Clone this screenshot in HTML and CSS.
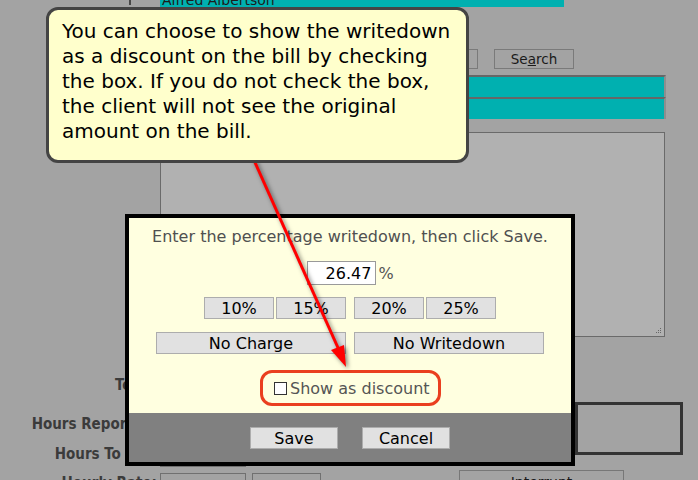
FILE: index.html
```html
<!DOCTYPE html>
<html>
<head>
<meta charset="utf-8">
<link rel="stylesheet" href="styles.css">
</head>
<body>
<div class="page">
  <div class="row r-client">
    <div class="lbl"><span class="tick"></span></div>
    <div class="client">Alfred Albertson</div>
  </div>
  <div class="row r-search">
    <div class="lbl"></div>
    <div class="search-input"></div>
    <button class="search-btn">Se<u>a</u>rch</button>
  </div>
  <div class="row r-bar first"><div class="lbl"></div><div class="bar"></div></div>
  <div class="row r-bar"><div class="lbl"></div><div class="bar"></div></div>
  <div class="row r-notes">
    <div class="lbl"></div>
    <div class="notes">
      <svg class="grip" width="7" height="7" viewBox="0 0 7 7"><rect x="5" y="1" width="1" height="1" fill="#666"/><rect x="3" y="3" width="1" height="1" fill="#666"/><rect x="5" y="3" width="1" height="1" fill="#666"/><rect x="1" y="5" width="1" height="1" fill="#666"/><rect x="3" y="5" width="1" height="1" fill="#666"/><rect x="5" y="5" width="1" height="1" fill="#666"/></svg>
    </div>
  </div>
  <div class="lower">
    <div class="flbl l1">Total:</div>
    <div class="flbl l2">Hours Reported:</div>
    <div class="flbl l3">Hours To Bill:</div>
    <div class="field f3"></div>
    <div class="flbl l4">Hourly Rate:</div>
    <div class="field f4a"></div>
    <div class="field f4b"></div>
    <button class="interrupt">Interrupt</button>
    <div class="side-box"></div>
  </div>
</div>

<div class="dialog">
  <div class="dlg-body">
    <p class="prompt">Enter the percentage writedown, then click Save.</p>
    <div class="pct-row"><input class="pct" type="text" value="26.47"><span class="pct-sign">%</span></div>
    <div class="quick-row">
      <div class="pair"><button class="btn q">10%</button><button class="btn q">15%</button></div>
      <div class="pair"><button class="btn q">20%</button><button class="btn q">25%</button></div>
    </div>
    <div class="wide-row"><button class="btn w">No Charge</button><button class="btn w">No Writedown</button></div>
    <div class="check-row"><label class="ring"><span class="box"></span>Show as discount</label></div>
  </div>
  <div class="dlg-foot"><button class="btn f">Save</button><button class="btn f">Cancel</button></div>
</div>

<svg class="arrow" width="698" height="480" viewBox="0 0 698 480">
  <g class="arrow-g">
    <line x1="253" y1="158" x2="339" y2="350" stroke="#ff0000" stroke-width="3"/>
    <polygon points="346,367 331,350 344,345" fill="#ff0000"/>
  </g>
</svg>

<div class="callout">You can choose to show the writedown as a discount on the bill by checking the box. If you do not check the box, the client will not see the original amount on the bill.</div>
</body>
</html>
```

FILE: styles.css
```css
* { box-sizing: border-box; }
html, body { margin: 0; padding: 0; }
body {
  width: 698px;
  height: 480px;
  overflow: hidden;
  position: relative;
  background: #a3a3a3;
  font-family: "DejaVu Sans", Verdana, sans-serif;
}

.row { display: flex; align-items: flex-start; }
.lbl { width: 160px; flex: none; }

.r-client { height: 7px; overflow: hidden; align-items: flex-end; }
.r-client .lbl { align-self: flex-start; }
.tick { display: block; width: 2px; height: 5px; margin-left: 129px; background: #474747; }
.client {
  width: 404px;
  height: 18px;
  padding: 2px 0 0 2px;
  background: #00b0b0;
  color: #1c1c1c;
  font-size: 14px;
  line-height: 18px;
  white-space: nowrap;
}

.r-search { margin-top: 42px; }
.search-input { width: 318px; height: 20px; border: 1px solid #7a7a7a; }
.search-btn {
  margin-left: 16px;
  width: 80px;
  height: 20px;
  padding: 0;
  border: 1px solid #7a7a7a;
  background: transparent;
  color: #1a1a1a;
  font-family: "DejaVu Sans", Verdana, sans-serif;
  font-size: 13.5px;
  line-height: 18px;
}

.r-bar.first { margin-top: 6px; }
.bar {
  width: 506px;
  height: 22px;
  background: #00b0b0;
  border-top: 2px solid #676767;
  border-right: 2px solid #8e8e8e;
}

.r-notes { margin-top: 13px; }
.notes {
  width: 505px;
  height: 205px;
  border: 1px solid #6a6a6a;
  background: #b1b1b1;
  display: flex;
  justify-content: flex-end;
  align-items: flex-end;
  padding: 2px;
}
.grip { display: block; }

.lower {
  margin-top: 37px;
  display: grid;
  grid-template-columns: 160px 86px 6px 69px 138px 116px 49px 59px;
  grid-template-rows: 39px 30px 29px 30px;
}
.flbl {
  grid-column: 1;
  text-align: right;
  padding: 2px 3px 0 0;
  font-family: "DejaVu Sans Condensed", "DejaVu Sans", sans-serif;
  font-weight: bold;
  font-size: 15px;
  line-height: 18px;
  color: #3b3b3b;
  white-space: nowrap;
}
.l1 { grid-row: 1; }
.l2 { grid-row: 2; }
.l3 { grid-row: 3; padding-right: 5px; }
.l4 { grid-row: 4; }
.field { border: 1px solid #707070; }
.f3 { grid-row: 3; grid-column: 2; margin-top: 2px; height: 22px; }
.f4a { grid-row: 4; grid-column: 2; margin-top: 1px; height: 24px; }
.f4b { grid-row: 4; grid-column: 4; margin-top: 1px; height: 24px; }
.interrupt {
  grid-row: 4;
  grid-column: 6 / 8;
  margin-top: -2px;
  height: 24px;
  padding: 0;
  border: 1px solid #777;
  background: transparent;
  color: #1a1a1a;
  font-family: "DejaVu Sans", sans-serif;
  font-size: 14px;
  line-height: 20px;
}
.side-box {
  grid-row: 1 / 4;
  grid-column: 7 / 9;
  align-self: start;
  margin-top: 28px;
  height: 53px;
  border: 3px solid #333;
}

/* dialog */
.dialog {
  position: absolute;
  left: 125px;
  top: 214px;
  width: 450px;
  height: 252px;
  border: 4px solid #000;
  background: #ffffe0;
  z-index: 2;
}
.dlg-body {
  height: 195px;
  display: flex;
  flex-direction: column;
  align-items: center;
}
.prompt {
  margin: 9px 0 0;
  font-size: 16px;
  line-height: 20px;
  color: #505050;
  white-space: nowrap;
}
.pct-row { margin-top: 14px; display: flex; align-items: center; padding-left: 1px; }
.pct {
  width: 69px;
  height: 24px;
  border: 1px solid #9a9a9a;
  background: #fff;
  text-align: right;
  padding: 1px 4px 0 0;
  font-family: "DejaVu Sans", sans-serif;
  font-size: 16px;
  color: #000;
  outline: none;
}
.pct-sign { margin-left: 2px; font-size: 16px; color: #555; }

.btn {
  height: 22px;
  padding: 2px 0 0;
  border: 1px solid #adadad;
  background: #e1e1e1;
  color: #000;
  font-family: "DejaVu Sans", sans-serif;
  font-size: 16px;
  line-height: 18px;
}
.quick-row { margin-top: 12px; display: flex; gap: 8px; }
.pair { display: flex; gap: 2px; }
.q { width: 70px; }
.wide-row { margin-top: 13px; display: flex; gap: 8px; }
.w { width: 190px; }

.check-row { margin-top: 16px; display: flex; justify-content: center; padding-left: 1px; }
.ring {
  width: 181px;
  height: 36px;
  border: 3px solid #ea3f1f;
  border-radius: 12px;
  display: flex;
  align-items: center;
  padding-left: 11px;
  gap: 3px;
  font-size: 16px;
  color: #555;
  white-space: nowrap;
}
.box { width: 13px; height: 13px; border: 1px solid #333; background: #fff; flex: none; }

.dlg-foot {
  height: 49px;
  background: #808080;
  display: flex;
  justify-content: center;
  gap: 24px;
  padding-top: 14px;
}
.f { width: 88px; }

/* callout + arrow */
.arrow {
  position: absolute;
  left: 0;
  top: 0;
  z-index: 3;
  pointer-events: none;
}
.arrow-g { filter: drop-shadow(2px 2px 2px rgba(0,0,0,0.5)); }

.callout {
  position: absolute;
  left: 46px;
  top: 7px;
  width: 423px;
  height: 156px;
  border: 3px solid #444;
  border-radius: 12px;
  background: #ffffcc;
  padding: 9px 9px 0 13px;
  font-family: "DejaVu Sans", Verdana, sans-serif;
  font-size: 20px;
  line-height: 25px;
  color: #000;
  z-index: 4;
}
```
